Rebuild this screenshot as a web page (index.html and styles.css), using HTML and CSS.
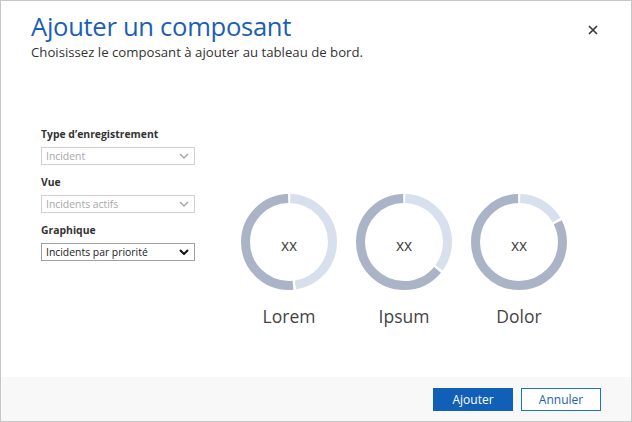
FILE: index.html
```html
<!DOCTYPE html>
<html lang="fr">
<head>
<meta charset="utf-8">
<title>Ajouter un composant</title>
<link rel="stylesheet" href="styles.css">
</head>
<body>
<div class="dialog">
  <header class="head">
    <div class="head-text">
      <h1 class="title">Ajouter un composant</h1>
      <p class="subtitle">Choisissez le composant à ajouter au tableau de bord.</p>
    </div>
    <button class="close" aria-label="Fermer">
      <svg width="10" height="10" viewBox="0 0 10 10"><path d="M1 1L9 9M9 1L1 9" stroke="#333" stroke-width="1.6" fill="none"/></svg>
    </button>
  </header>
  <main class="body">
    <form class="form">
      <label class="lbl">Type d’enregistrement</label>
      <div class="sel disabled"><span>Incident</span>
        <svg width="10" height="6" viewBox="0 0 10 6"><path d="M1 1L5 5L9 1" stroke="#a6a6a6" stroke-width="1.4" fill="none"/></svg></div>
      <label class="lbl">Vue</label>
      <div class="sel disabled"><span>Incidents actifs</span>
        <svg width="10" height="6" viewBox="0 0 10 6"><path d="M1 1L5 5L9 1" stroke="#a6a6a6" stroke-width="1.4" fill="none"/></svg></div>
      <label class="lbl">Graphique</label>
      <div class="sel active"><span>Incidents par priorité</span>
        <svg width="10" height="6" viewBox="0 0 10 6"><path d="M1 1L5 5L9 1" stroke="#111" stroke-width="2" fill="none"/></svg></div>
    </form>
    <div class="charts">
      <figure class="chart">
        <svg width="96" height="96" viewBox="0 0 96 96">
          <g transform="rotate(-90 48 48)">
            <circle cx="48" cy="48" r="43.5" fill="none" stroke="#d8dfed" stroke-width="9" stroke-dasharray="128.7 600" stroke-dashoffset="-1.25"/>
            <circle cx="48" cy="48" r="43.5" fill="none" stroke="#aab4c6" stroke-width="9" stroke-dasharray="0 132.4 139.6 600"/>
          </g>
          <text x="48" y="56.5" class="xx" text-anchor="middle">xx</text>
        </svg>
        <figcaption>Lorem</figcaption>
      </figure>
      <figure class="chart">
        <svg width="96" height="96" viewBox="0 0 96 96">
          <g transform="rotate(-90 48 48)">
            <circle cx="48" cy="48" r="43.5" fill="none" stroke="#d8dfed" stroke-width="9" stroke-dasharray="94.5 600" stroke-dashoffset="-1.25"/>
            <circle cx="48" cy="48" r="43.5" fill="none" stroke="#aab4c6" stroke-width="9" stroke-dasharray="0 98.3 173.8 600"/>
          </g>
          <text x="48" y="56.5" class="xx" text-anchor="middle">xx</text>
        </svg>
        <figcaption>Ipsum</figcaption>
      </figure>
      <figure class="chart">
        <svg width="96" height="96" viewBox="0 0 96 96">
          <g transform="rotate(-90 48 48)">
            <circle cx="48" cy="48" r="43.5" fill="none" stroke="#d8dfed" stroke-width="9" stroke-dasharray="44 600" stroke-dashoffset="-1.25"/>
            <circle cx="48" cy="48" r="43.5" fill="none" stroke="#aab4c6" stroke-width="9" stroke-dasharray="0 47.7 224.3 600"/>
          </g>
          <text x="48" y="56.5" class="xx" text-anchor="middle">xx</text>
        </svg>
        <figcaption>Dolor</figcaption>
      </figure>
    </div>
  </main>
  <footer class="foot">
    <button class="btn primary">Ajouter</button>
    <button class="btn secondary">Annuler</button>
  </footer>
</div>
</body>
</html>
```
FILE: styles.css
```css
* { box-sizing: border-box; }
html, body { margin: 0; padding: 0; background: #fff; }
body { font-family: "Open Sans", "Noto Sans", sans-serif; color: #333; }

.dialog {
  width: 632px;
  height: 422px;
  border: 1px solid #c6c6c6;
  display: flex;
  flex-direction: column;
  background: #fff;
}

.head {
  display: flex;
  justify-content: space-between;
  align-items: flex-start;
  padding: 9px 32px 0 30px;
  height: 64px;
}
.title {
  margin: 0;
  font-weight: 400;
  font-size: 25.6px;
  line-height: 33px;
  color: #1b5fb5;
  letter-spacing: -0.3px;
}
.subtitle {
  margin: 0;
  font-size: 13.2px;
  line-height: 18px;
  color: #333;
}
.close {
  border: 0;
  background: none;
  padding: 0;
  margin-top: 14px;
  width: 12px;
  height: 12px;
  display: flex;
  align-items: center;
  justify-content: center;
}

.body {
  flex: 1;
  display: flex;
  align-items: flex-start;
  padding-left: 40px;
}

.form {
  width: 154px;
  padding-top: 61px;
  display: flex;
  flex-direction: column;
}
.lbl {
  font-size: 10.4px;
  font-weight: 700;
  color: #333;
  line-height: 16px;
  margin-bottom: 5px;
}
.sel {
  height: 18px;
  border: 1px solid #c8c8c8;
  display: flex;
  align-items: center;
  justify-content: space-between;
  padding: 0 5px 0 4px;
  font-size: 10.4px;
  margin-bottom: 9px;
}
.sel.disabled { color: #a8a8a8; border-color: #d0d0d0; }
.sel.active { color: #222; border-color: #a0a0a0; }

.charts {
  display: flex;
  gap: 19px;
  margin-left: 46px;
  padding-top: 129px;
}
.chart {
  margin: 0;
  display: flex;
  flex-direction: column;
  align-items: center;
  width: 96px;
}
.chart svg { display: block; }
.xx { font-family: "Open Sans", sans-serif; font-size: 15.5px; fill: #444; }
.chart figcaption {
  margin-top: 15px;
  font-size: 17.5px;
  line-height: 22px;
  color: #444;
}

.foot {
  height: 44px;
  background: #f8f8f8;
  display: flex;
  justify-content: flex-end;
  align-items: center;
  gap: 8px;
  padding: 0 30px 0 0;
}
.btn {
  width: 80px;
  height: 23px;
  font-family: "Open Sans", sans-serif;
  font-size: 12px;
  padding: 0;
  cursor: pointer;
}
.btn.primary {
  background: #1160b7;
  color: #fff;
  border: 1px solid #1160b7;
}
.btn.secondary {
  background: #fff;
  color: #1b5fb5;
  border: 1px solid #1a73d0;
}
```
